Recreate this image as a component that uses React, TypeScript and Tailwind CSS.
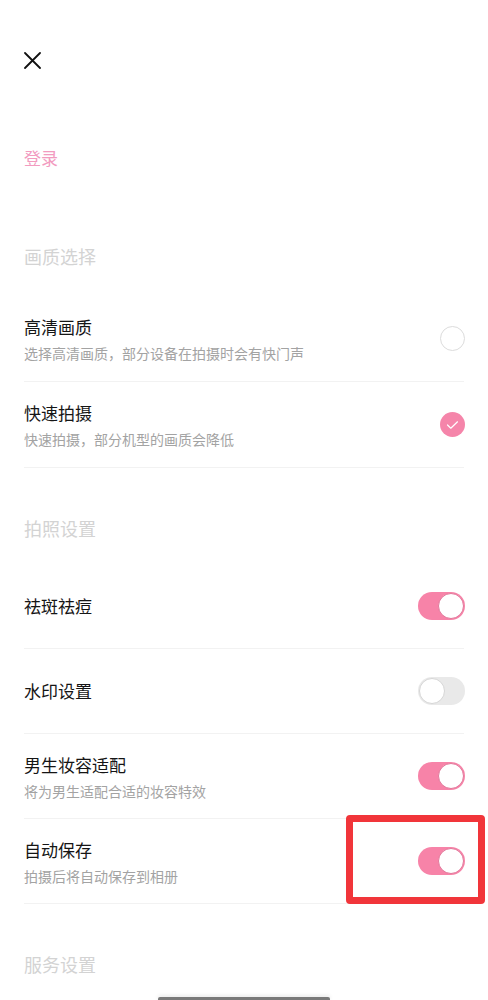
import React from 'react';

type Row = {
  title: string;
  sub?: string;
  control: 'radio' | 'check' | 'on' | 'off';
};

const qualityRows: Row[] = [
  { title: '高清画质', sub: '选择高清画质，部分设备在拍摄时会有快门声', control: 'radio' },
  { title: '快速拍摄', sub: '快速拍摄，部分机型的画质会降低', control: 'check' },
];

const photoRows: Row[] = [
  { title: '祛斑祛痘', control: 'on' },
  { title: '水印设置', control: 'off' },
  { title: '男生妆容适配', sub: '将为男生适配合适的妆容特效', control: 'on' },
  { title: '自动保存', sub: '拍摄后将自动保存到相册', control: 'on' },
];

const Toggle = ({ on }: { on: boolean }) => (
  <div
    className={`w-[47px] h-[28px] rounded-full p-[1px] flex items-center ${
      on ? 'bg-[#f783a8] justify-end' : 'bg-[#e9e9e9] justify-start'
    }`}
  >
    <div
      className={`w-[26px] h-[26px] rounded-full bg-white border ${
        on ? 'border-[#e2779a]' : 'border-[#d6d6d6]'
      }`}
    />
  </div>
);

const Control = ({ kind }: { kind: Row['control'] }) => {
  if (kind === 'radio')
    return <div className="w-[25px] h-[25px] rounded-full border border-[#dcdcdc]" />;
  if (kind === 'check')
    return (
      <div className="w-[25px] h-[25px] rounded-full bg-[#f585aa] flex items-center justify-center">
        <svg width="13" height="10" viewBox="0 0 13 10" fill="none">
          <path d="M1.5 5 L4.8 8.2 L11.5 1.8" stroke="white" strokeWidth="1.2" strokeLinecap="round" strokeLinejoin="round" />
        </svg>
      </div>
    );
  return <Toggle on={kind === 'on'} />;
};

const SettingRow = ({ row, h }: { row: Row; h: string }) => (
  <div className={`mx-6 ${h} border-b border-[#f2f2f2] flex items-center justify-between`}>
    <div className="flex flex-col">
      <span className="text-[17px] leading-[24px] text-[#151515]">{row.title}</span>
      {row.sub && (
        <span className="mt-[5px] text-[14px] leading-[18px] text-[#a3a3a3]">{row.sub}</span>
      )}
    </div>
    <div className="w-[47px] flex justify-end -mr-[1px]">
      <Control kind={row.control} />
    </div>
  </div>
);

export default function App() {
  return (
    <div
      className="relative w-full h-[1000px] overflow-hidden bg-white"
      style={{ fontFamily: '"Noto Sans CJK SC", "Noto Sans", sans-serif' }}
    >
      {/* nav */}
      <div className="h-[120px] px-6 flex items-center">
        <svg width="17" height="17" viewBox="0 0 17 17" fill="none">
          <path d="M1 1 L16 16 M16 1 L1 16" stroke="#111" strokeWidth="1.8" strokeLinecap="round" />
        </svg>
      </div>

      <div className="h-[76px] px-6 flex items-center">
        <span className="text-[17px] leading-[24px] text-[#f29bbf]">登录</span>
      </div>

      <div className="h-[100px] px-6 flex items-end pb-[28px]">
        <span className="text-[18px] leading-[24px] text-[#d3d3d3]">画质选择</span>
      </div>
      {qualityRows.map((r) => (
        <SettingRow key={r.title} row={r} h="h-[86px]" />
      ))}

      <div className="h-[96px] px-6 flex items-end pb-[24px]">
        <span className="text-[18px] leading-[24px] text-[#d3d3d3]">拍照设置</span>
      </div>
      {photoRows.map((r) => (
        <SettingRow key={r.title} row={r} h="h-[85px]" />
      ))}

      <div className="h-[85px] px-6 flex items-end pb-[13px]">
        <span className="text-[18px] leading-[24px] text-[#d3d3d3]">服务设置</span>
      </div>

      {/* highlight annotation */}
      <div className="absolute left-[346px] top-[815px] w-[139px] h-[89px] border-[7px] border-[#f1353a] rounded-[4px]" />

      {/* bottom sheet edge */}
      <div className="absolute left-[158px] bottom-0 w-[172px] h-[3px] bg-[#7a7a7a] rounded-t-[2px] shadow-[0_-1px_4px_rgba(0,0,0,0.12)]" />
    </div>
  );
}
